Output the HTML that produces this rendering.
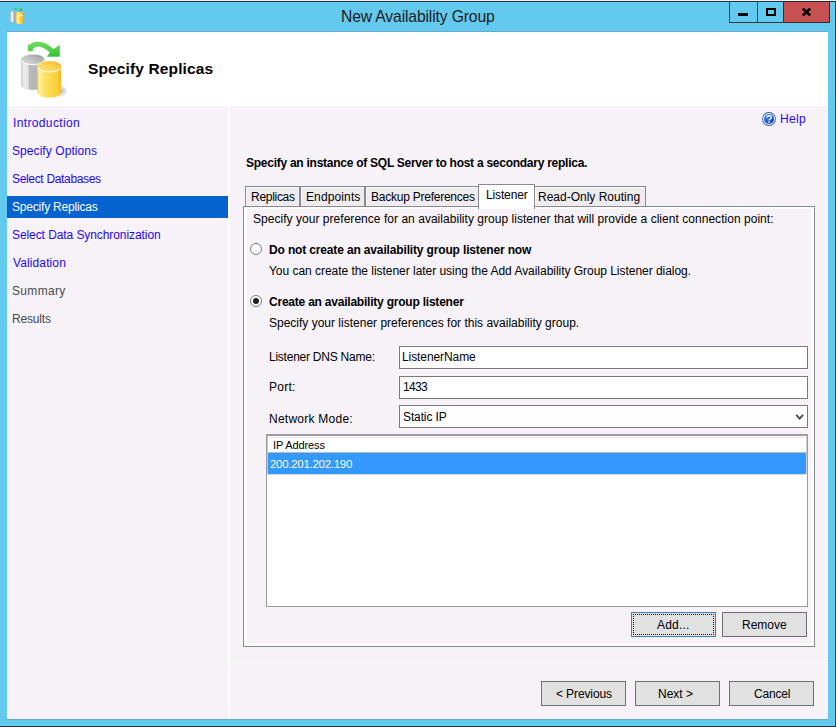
<!DOCTYPE html>
<html><head><meta charset="utf-8">
<style>
html,body{margin:0;padding:0;}
body{width:836px;height:727px;position:relative;overflow:hidden;background:#63c9ee;font-family:"Liberation Sans",sans-serif;color:#000;}
.a{position:absolute;}
.t{position:absolute;white-space:nowrap;font-size:12px;line-height:12px;}
.b{font-weight:bold;}
.lnk{color:#2a08ee;}
.btn{position:absolute;box-sizing:border-box;border:1px solid #707070;background:#e1e1e1;height:25px;width:85px;}
.tab{top:186px;height:21px;box-sizing:border-box;border:1px solid #8a8a92;border-bottom:none;background:#efebef;box-shadow:inset 1px 1px 0 #f9f7f9;}
.tb{position:absolute;box-sizing:border-box;border:1px solid #7a7a7a;background:#fff;}
</style></head><body>
<!-- window frame lines -->
<div class="a" style="left:0;top:0;width:836px;height:1px;background:#eef0fb"></div>
<div class="a" style="left:0;top:1px;width:836px;height:1px;background:#232d33"></div>
<div class="a" style="left:0;top:2px;width:835px;height:1px;background:#66d3f8"></div>
<div class="a" style="left:835px;top:1px;width:1px;height:726px;background:#232d33"></div>
<div class="a" style="left:834px;top:2px;width:1px;height:724px;background:#66d3f8"></div>
<div class="a" style="left:0;top:726px;width:836px;height:1px;background:#232d33"></div>
<div class="a" style="left:0;top:725px;width:835px;height:1px;background:#66d3f8"></div>

<!-- title bar icon -->
<svg class="a" style="left:9px;top:6px" width="16" height="19" viewBox="0 0 16 19">
  <defs>
    <linearGradient id="sg" x1="0" x2="1" y1="0" y2="0"><stop offset="0" stop-color="#c4c4c4"/><stop offset="0.3" stop-color="#f6f6f6"/><stop offset="0.6" stop-color="#a8a8a8"/><stop offset="1" stop-color="#bcbcbc"/></linearGradient>
    <linearGradient id="sy" x1="0" x2="1" y1="0" y2="0"><stop offset="0" stop-color="#f9c640"/><stop offset="0.25" stop-color="#fff0a0"/><stop offset="0.5" stop-color="#fdd846"/><stop offset="1" stop-color="#f2a020"/></linearGradient>
  </defs>
  <rect x="5.9" y="2.1" width="1.1" height="1.8" fill="#3cc63c"/>
  <rect x="5.9" y="3.0" width="2" height="0.9" fill="#3cc63c"/>
  <rect x="7.6" y="2.2" width="3.6" height="0.9" fill="#4cd24c"/>
  <path d="M13 2.2 L13 4.9 L10.2 4.9 Z" fill="#2fb82f"/>
  <rect x="1.2" y="5.2" width="7" height="10.7" rx="1.6" fill="url(#sg)"/>
  <rect x="7" y="6" width="7.9" height="12" rx="1.9" fill="url(#sy)"/>
  <path d="M8.3 9.5 L13.6 9.5 M8.8 9.5 L8.8 16" stroke="#fffbe0" stroke-width="0.9" fill="none"/>
</svg>
<div class="t" style="left:341px;top:9px;font-size:15.7px;line-height:15px;color:#1c1c1c;letter-spacing:-0.14px">New Availability Group</div>

<!-- caption buttons -->
<div class="a" style="left:729px;top:1px;width:29px;height:22px;box-sizing:border-box;border:1px solid #3a3a3a;border-top:none"></div>
<div class="a" style="left:738px;top:13px;width:10px;height:3px;background:#000"></div>
<div class="a" style="left:757px;top:1px;width:27px;height:22px;box-sizing:border-box;border:1px solid #3a3a3a;border-top:none;border-left:none"></div>
<div class="a" style="left:766px;top:8px;width:10px;height:8px;box-sizing:border-box;border:2px solid #000"></div>
<div class="a" style="left:783px;top:2px;width:47px;height:21px;box-sizing:border-box;border:1px solid #3a2a2a;border-top:none;background:#c75050"></div>
<svg class="a" style="left:802px;top:8px" width="9" height="8" viewBox="0 0 9 8"><path d="M0.8 0.5 L8.2 7.5 M8.2 0.5 L0.8 7.5" stroke="#000" stroke-width="2.5"/></svg>

<!-- content area -->
<div class="a" style="left:7px;top:31px;width:821px;height:1px;background:#6aa9cb"></div>
<div class="a" style="left:7px;top:32px;width:821px;height:687px;background:#f6f2f7"></div>
<div class="a" style="left:7px;top:719px;width:821px;height:1px;background:#6aa9cb"></div>

<!-- header -->
<div class="a" style="left:7px;top:32px;width:821px;height:74px;background:#fff"></div>
<svg class="a" style="left:14px;top:36px" width="60" height="66" viewBox="0 0 60 66">
  <defs>
    <linearGradient id="gb" x1="0" x2="1" y1="0" y2="0"><stop offset="0" stop-color="#c8c8c8"/><stop offset="0.12" stop-color="#ececec"/><stop offset="0.3" stop-color="#e2e2e2"/><stop offset="0.36" stop-color="#b9b9b9"/><stop offset="0.8" stop-color="#b4b4b4"/><stop offset="1" stop-color="#c9c9c9"/></linearGradient>
    <linearGradient id="gt" x1="0" x2="1" y1="1" y2="0"><stop offset="0" stop-color="#e2e2e2"/><stop offset="0.5" stop-color="#c0c0c0"/><stop offset="1" stop-color="#9a9a9a"/></linearGradient>
    <linearGradient id="yb" x1="0" x2="1" y1="0" y2="0"><stop offset="0" stop-color="#f7cf4a"/><stop offset="0.1" stop-color="#fff2a8"/><stop offset="0.25" stop-color="#fde574"/><stop offset="0.35" stop-color="#fde05c"/><stop offset="0.85" stop-color="#f9cf3a"/><stop offset="1" stop-color="#f3b52a"/></linearGradient>
    <linearGradient id="yt" x1="0" x2="1" y1="1" y2="0"><stop offset="0" stop-color="#fde58a"/><stop offset="0.6" stop-color="#f8cf4e"/><stop offset="1" stop-color="#f0b530"/></linearGradient>
    <linearGradient id="ag" x1="0" x2="0" y1="0" y2="1"><stop offset="0" stop-color="#6ee05e"/><stop offset="1" stop-color="#35c235"/></linearGradient>
    <radialGradient id="sh" cx="0.5" cy="0.5" r="0.5"><stop offset="0" stop-color="#000" stop-opacity="0.28"/><stop offset="1" stop-color="#000" stop-opacity="0"/></radialGradient>
  </defs>
  <ellipse cx="47" cy="55" rx="7" ry="6" fill="url(#sh)"/>
  <path d="M7.1 23.5 Q7.1 18.5 18.8 18.5 Q30.5 18.5 30.5 23.5 L30.5 49 Q30.5 53.9 18.8 53.9 Q7.1 53.9 7.1 49 Z" fill="url(#gb)"/>
  <ellipse cx="18.8" cy="23.6" rx="11.2" ry="4.9" fill="url(#gt)"/>
  <path d="M7.8 24.5 Q9 28.6 18.8 28.6 Q28.6 28.6 29.8 24.5" stroke="#f4f4f4" stroke-width="1.2" fill="none"/>
  <path d="M23.3 30.5 Q23.3 25 35.15 25 Q47 25 47 30.5 L47 56 Q47 61.5 35.15 61.5 Q23.3 61.5 23.3 56 Z" fill="url(#yb)"/>
  <ellipse cx="35.15" cy="30.6" rx="11.3" ry="5.2" fill="url(#yt)"/>
  <path d="M24 31.5 Q25.5 35.8 35.15 35.8 Q44.8 35.8 46.3 31.5" stroke="#fff6c8" stroke-width="1.2" fill="none"/>
  <path d="M15.2 9.4 Q24.5 0.8 39.8 13.2 L45.6 9.4 L45.6 20.4 L33.2 20.4 L36.3 16.5 Q24.5 5.8 18.6 12.6 L19.3 14.4 L14.2 14.9 L14.2 8.4 Z" fill="url(#ag)" stroke="#3cbf3c" stroke-width="0.5" stroke-linejoin="round"/>
</svg>
<div class="t b" style="left:88px;top:61px;font-size:15.5px;line-height:15px;letter-spacing:0.13px">Specify Replicas</div>

<!-- separator between nav and panel -->
<div class="a" style="left:228px;top:106px;width:2px;height:613px;background:#fff"></div>

<!-- nav -->
<div class="a" style="left:7px;top:196px;width:221px;height:22px;background:#0563cf"></div>
<div class="t lnk" style="left:13px;top:117px;letter-spacing:0.36px">Introduction</div>
<div class="t lnk" style="left:12px;top:145px;letter-spacing:0.07px">Specify Options</div>
<div class="t lnk" style="left:12px;top:173px;letter-spacing:-0.33px">Select Databases</div>
<div class="t" style="left:12px;top:201px;color:#fff;letter-spacing:-0.2px">Specify Replicas</div>
<div class="t lnk" style="left:12px;top:229px;letter-spacing:-0.08px">Select Data Synchronization</div>
<div class="t lnk" style="left:13px;top:257px;letter-spacing:0.11px">Validation</div>
<div class="t" style="left:12px;top:285px;color:#4a4a4a;letter-spacing:0.33px">Summary</div>
<div class="t" style="left:12px;top:313px;color:#4a4a4a;letter-spacing:-0.17px">Results</div>

<!-- help -->
<svg class="a" style="left:762px;top:112px" width="14" height="14" viewBox="0 0 14 14">
  <defs><linearGradient id="hg" x1="0" y1="0" x2="1" y2="1"><stop offset="0" stop-color="#5a9af5"/><stop offset="0.5" stop-color="#1f5fd6"/><stop offset="1" stop-color="#0c3a9e"/></linearGradient></defs>
  <circle cx="7" cy="7" r="6.9" fill="#34589a"/>
  <circle cx="7" cy="7" r="6.1" fill="#eef4ff"/>
  <circle cx="7" cy="7" r="5.1" fill="url(#hg)"/>
  <path d="M5.1 5.5 Q5.1 3.7 7.1 3.7 Q9.2 3.7 9.2 5.4 Q9.2 6.5 8 7.1 Q7.2 7.5 7.2 8.5" stroke="#fff" stroke-width="1.5" fill="none"/>
  <rect x="6.4" y="9.3" width="1.6" height="1.5" fill="#fff"/>
</svg>
<div class="t lnk" style="left:780px;top:113px;letter-spacing:0.33px">Help</div>

<div class="t b" style="left:246px;top:157px;letter-spacing:-0.26px">Specify an instance of SQL Server to host a secondary replica.</div>

<!-- tabs -->
<div class="a tab" style="left:245px;width:55px"></div>
<div class="a tab" style="left:300px;width:65px"></div>
<div class="a tab" style="left:365px;width:114px"></div>
<div class="a tab" style="left:534px;width:112px"></div>
<div class="t" style="left:251px;top:191px;letter-spacing:-0.29px">Replicas</div>
<div class="t" style="left:306px;top:191px;letter-spacing:0.12px">Endpoints</div>
<div class="t" style="left:371px;top:191px;letter-spacing:-0.24px">Backup Preferences</div>
<div class="t" style="left:538px;top:191px;letter-spacing:0px">Read-Only Routing</div>

<!-- panel -->
<div class="a" style="left:243px;top:206px;width:572px;height:441px;box-sizing:border-box;border:1px solid #8a8a92;background:#fff"></div>
<div class="a" style="left:247px;top:209px;width:564px;height:434px;background:#f6f2f7"></div>
<!-- active tab -->
<div class="a" style="left:478px;top:184px;width:57px;height:25px;box-sizing:border-box;border:1px solid #8a8a92;border-bottom:none;background:#fff"></div>
<div class="t" style="left:486px;top:189px;letter-spacing:-0.14px">Listener</div>

<div class="t" style="left:253px;top:213px;letter-spacing:0.035px">Specify your preference for an availability group listener that will provide a client connection point:</div>

<!-- radios -->
<div class="a" style="left:250px;top:243px;width:12px;height:12px;box-sizing:border-box;border:1px solid #7a7a7a;border-radius:50%;background:#fff"></div>
<div class="t b" style="left:269px;top:244px;letter-spacing:-0.15px">Do not create an availability group listener now</div>
<div class="t" style="left:269px;top:265px;letter-spacing:-0.035px">You can create the listener later using the Add Availability Group Listener dialog.</div>

<div class="a" style="left:250px;top:295px;width:12px;height:12px;box-sizing:border-box;border:1px solid #7a7a7a;border-radius:50%;background:#fff"></div>
<div class="a" style="left:253px;top:298px;width:6px;height:6px;border-radius:50%;background:#222"></div>
<div class="t b" style="left:269px;top:296px;letter-spacing:-0.22px">Create an availability group listener</div>
<div class="t" style="left:269px;top:317px;letter-spacing:0px">Specify your listener preferences for this availability group.</div>

<!-- form -->
<div class="t" style="left:269px;top:351px;letter-spacing:-0.24px">Listener DNS Name:</div>
<div class="tb" style="left:399px;top:346px;width:409px;height:23px"></div>
<div class="t" style="left:402px;top:351px;letter-spacing:-0.09px">ListenerName</div>

<div class="t" style="left:269px;top:381px;letter-spacing:0.25px">Port:</div>
<div class="tb" style="left:399px;top:376px;width:409px;height:23px"></div>
<div class="t" style="left:403px;top:381px;letter-spacing:-0.67px">1433</div>

<div class="t" style="left:269px;top:413px;letter-spacing:0.25px">Network Mode:</div>
<div class="tb" style="left:399px;top:405px;width:409px;height:23px"></div>
<div class="t" style="left:403px;top:411px;letter-spacing:-0.12px">Static IP</div>
<svg class="a" style="left:795px;top:414px" width="10" height="7" viewBox="0 0 10 7"><path d="M1.2 0.9 L4.6 4.7 L8 0.9" stroke="#4a4a4a" stroke-width="1.9" fill="none"/></svg>

<!-- list -->
<div class="a" style="left:266px;top:434px;width:542px;height:173px;box-sizing:border-box;border:1px solid #9a99a1;border-top:2px solid #9e9ca4;background:#fff"></div>
<div class="a" style="left:267px;top:436px;width:1px;height:38px;background:#c8c8c8"></div>
<div class="a" style="left:806px;top:436px;width:1px;height:38px;background:#d0d0d0"></div>
<div class="a" style="left:268px;top:437px;width:538px;height:1px;background:#ebe7eb"></div>
<div class="a" style="left:268px;top:452px;width:538px;height:1px;background:#b8b8b8"></div>
<div class="a" style="left:268px;top:453px;width:538px;height:21px;background:#3399ff"></div>
<div class="a" style="left:268px;top:474px;width:538px;height:1px;background:#d8d8d8"></div>
<div class="t" style="left:273px;top:439px;font-size:11px;letter-spacing:-0.11px">IP Address</div>
<div class="t" style="left:270px;top:458px;color:#fff;font-size:11.5px;letter-spacing:-0.29px">200.201.202.190</div>

<!-- add/remove -->
<div class="btn" style="left:631px;top:612px;border-color:#3c7fb1"></div>
<div class="a" style="left:633px;top:614px;width:81px;height:21px;box-sizing:border-box;border:1px dotted #000"></div>
<div class="t" style="left:657px;top:619px;letter-spacing:0.2px">Add...</div>
<div class="btn" style="left:722px;top:612px"></div>
<div class="t" style="left:742px;top:619px;letter-spacing:0px">Remove</div>

<!-- bottom separator -->
<div class="a" style="left:230px;top:662px;width:598px;height:1px;background:#fff"></div>

<!-- wizard buttons -->
<div class="btn" style="left:541px;top:681px"></div>
<div class="t" style="left:556px;top:688px;letter-spacing:-0.11px">&lt; Previous</div>
<div class="btn" style="left:635px;top:681px"></div>
<div class="t" style="left:658px;top:688px;letter-spacing:0px">Next &gt;</div>
<div class="btn" style="left:729px;top:681px"></div>
<div class="t" style="left:754px;top:688px;letter-spacing:-0.2px">Cancel</div>
</body></html>
